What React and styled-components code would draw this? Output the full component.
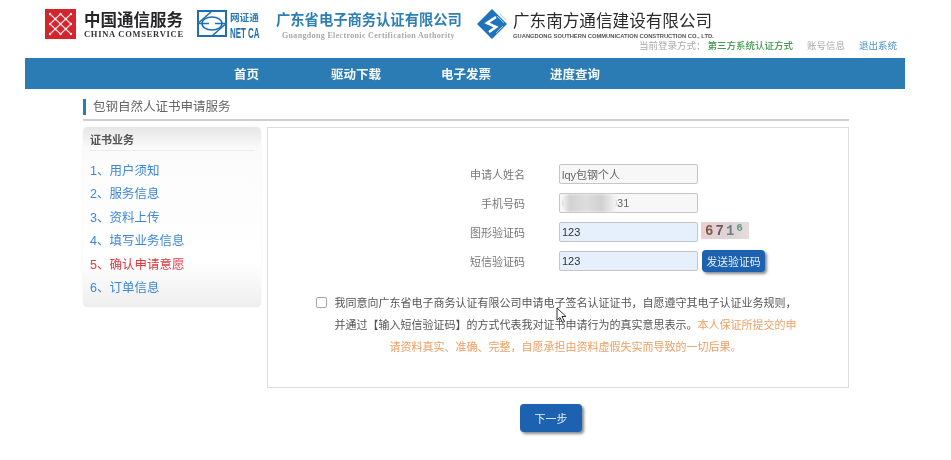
import React from "react";
import styled, { createGlobalStyle } from "styled-components";

const GlobalStyle = createGlobalStyle`
  html, body {
    margin: 0;
    padding: 0;
    background: #fff;
    font-family: "Liberation Sans", "Noto Sans CJK SC", sans-serif;
  }
`;

const Page = styled.div`
  width: 951px;
  height: 460px;
  overflow: hidden;
  filter: blur(0.35px);
`;

const Header = styled.header`
  height: 58px;
  padding: 9px 54px 0 45px;
  box-sizing: border-box;
`;

const LogoRow = styled.div`
  display: flex;
  align-items: flex-start;
  height: 31px;
`;

const LogoStack = styled.div`
  display: flex;
  flex-direction: column;
  flex: none;
  width: ${p => p.$width}px;
  margin-left: ${p => p.$left}px;
`;

const LogoIcon = styled.svg`
  display: block;
  flex: none;
  margin-left: ${p => p.$left || 0}px;
`;

const ComserviceName = styled.div`
  font-size: 16.5px;
  line-height: 18px;
  font-weight: 700;
  color: #26262a;
  margin-top: 2px;
`;

const ComserviceEn = styled.div`
  font-family: "Liberation Serif", serif;
  font-size: 8.5px;
  line-height: 10px;
  font-weight: 700;
  letter-spacing: 0.72px;
  white-space: nowrap;
  color: #333;
`;

const NetcaName = styled.div`
  font-size: 9.6px;
  line-height: 12px;
  font-weight: 700;
  white-space: nowrap;
  color: #2a78b8;
  margin-top: 3px;
`;

const NetcaEn = styled.div`
  font-size: 15px;
  line-height: 15px;
  font-weight: 700;
  white-space: nowrap;
  color: #1f6fb0;
  transform: scaleX(0.53);
  transform-origin: left center;
  margin-top: 1px;
`;

const CertName = styled.div`
  font-size: 14.3px;
  line-height: 20px;
  font-weight: 700;
  white-space: nowrap;
  color: #2c7fb6;
  margin-top: 1px;
`;

const CertEn = styled.div`
  font-family: "Liberation Serif", serif;
  font-size: 8px;
  line-height: 11px;
  font-weight: 700;
  white-space: nowrap;
  letter-spacing: 0.34px;
  color: #a8a8a8;
  margin-left: 6px;
`;

const SouthName = styled.div`
  font-size: 16.6px;
  line-height: 22px;
  color: #2a2a2a;
  white-space: nowrap;
  margin-top: 2px;
`;

const SouthEn = styled.div`
  font-size: 5.8px;
  line-height: 7px;
  font-weight: 700;
  white-space: nowrap;
  color: #555;
`;

const UserRow = styled.div`
  display: flex;
  justify-content: flex-end;
  font-size: 9.5px;
  line-height: 12px;
`;

const UserItem = styled.span`
  color: ${p => p.$color};
  font-weight: ${p => p.$bold ? 500 : 400};
  margin-left: ${p => p.$left || 0}px;
`;

const Nav = styled.nav`
  display: flex;
  height: 31px;
  margin: 0 46px 0 25px;
  padding-left: 209px;
  background: #2b7bb4;
  align-items: center;
`;

const NavLink = styled.a`
  font-size: 12.5px;
  font-weight: 700;
  color: #f4f8fb;
  white-space: nowrap;
  margin-right: ${p => p.$gap}px;
`;

const Content = styled.main`
  width: 766px;
  margin-left: 83px;
`;

const TitleBar = styled.div`
  display: flex;
  align-items: flex-start;
  height: 20px;
  margin-top: 10px;
  border-bottom: 2px solid #cfcfcf;
  font-size: 12.5px;
  line-height: 17px;
  color: #666;

  &::before {
    content: "";
    flex: none;
    width: 3px;
    height: 16px;
    margin-right: 7px;
    background: #2b7bb4;
  }
`;

const Columns = styled.div`
  display: flex;
  align-items: flex-start;
  gap: 6px;
  margin-top: 6px;
`;

const Side = styled.aside`
  width: 178px;
  height: 180px;
  box-sizing: border-box;
  padding: 0 6px 0 7px;
  border-radius: 5px;
  background: linear-gradient(#e6e6e6 0, #fbfbfb 22px, #fff 135px, #eeeeee 100%);
  box-shadow: 0 0 1px #ccc;
`;

const SideTitle = styled.div`
  height: 17px;
  padding-top: 6px;
  margin-bottom: 9px;
  font-size: 11px;
  line-height: 15px;
  font-weight: 700;
  color: #555;
  border-bottom: 1px solid #ececec;
`;

const StepList = styled.ol`
  list-style: none;
  margin: 0;
  padding: 0;
`;

const Step = styled.li`
  height: 23.4px;
  font-size: 12.5px;
  line-height: 23.4px;
  white-space: nowrap;
  color: ${p => p.$active ? "#e2393f" : "#3d86d8"};
`;

const Panel = styled.section`
  position: relative;
  width: 582px;
  height: 261px;
  box-sizing: border-box;
  padding-top: 36px;
  border: 1px solid #ddd;
`;

const FormRows = styled.div`
  display: flex;
  flex-direction: column;
  gap: 9px;
`;

const Row = styled.div`
  display: flex;
  align-items: center;
  height: 20px;
`;

const Label = styled.label`
  width: 257px;
  margin-right: 34px;
  flex: none;
  text-align: right;
  font-size: 11px;
  color: #777;
`;

const FieldWrap = styled.div`
  position: relative;
  flex: none;
  width: 139px;
  height: 20px;
`;

const Input = styled.input`
  display: block;
  width: 100%;
  height: 100%;
  box-sizing: border-box;
  margin: 0;
  padding: 0 2px;
  border: 1px solid #c2c6ca;
  border-radius: 2px;
  outline: none;
  font: 11px "Liberation Sans", "Noto Sans CJK SC", sans-serif;
  background: ${p => p.$filled ? "#e6f0fd" : "#f7f7f7"};
  color: ${p => p.$filled ? "#333" : "#666"};
`;

const PhoneMask = styled.span`
  position: absolute;
  left: 3px;
  top: 1px;
  width: 55px;
  height: 18px;
  border-radius: 6px;
  background: linear-gradient(90deg, #f6f6f6 0, #d2d2d2 14%, #dedede 45%, #d0d0d0 72%, #f7f7f7 100%);
  filter: blur(1px);
`;

const Captcha = styled.div`
  align-self: flex-start;
  display: flex;
  align-items: center;
  justify-content: center;
  width: 48px;
  height: 17px;
  margin-left: 3px;
  background: linear-gradient(90deg, #eccfd2, #dcd3d6 60%, #e6dcdc);
  font: 700 14px "Liberation Mono", monospace;
  letter-spacing: 2px;
`;

const CaptchaDigit = styled.span`
  color: ${p => p.$color};
  font-size: ${p => p.$size || 14}px;
  position: relative;
  top: ${p => p.$up || 0}px;
`;

const SendButton = styled.button`
  flex: none;
  width: 63px;
  height: 22px;
  margin-left: 4px;
  padding: 0;
  border: none;
  border-radius: 4px;
  background: #1d62b0;
  color: #e8eff7;
  font: 10.8px "Liberation Sans", "Noto Sans CJK SC", sans-serif;
  white-space: nowrap;
  box-shadow: 2px 2px 3px #888;
`;

const Agreement = styled.div`
  display: flex;
  align-items: flex-start;
  margin: 21px 0 0 48px;
`;

const CheckBox = styled.input`
  appearance: none;
  flex: none;
  width: 11px;
  height: 11px;
  box-sizing: border-box;
  margin: 5px 7px 0 0;
  border: 1px solid #a5a5a5;
  border-radius: 2px;
  background: #fff;
`;

const AgreementText = styled.div`
  width: 463px;
  font-size: 11px;
  line-height: 22px;
  text-align: center;
  color: #555;
`;

const AgreementLine = styled.div`
  white-space: nowrap;
`;

const Warning = styled.span`
  color: #ef9e63;
`;

const Pointer = styled.svg`
  position: absolute;
  left: 288px;
  top: 179px;
`;

const NextRow = styled.div`
  display: flex;
  margin-top: 16px;
  padding-left: 437px;
`;

const NextButton = styled.button`
  width: 62px;
  height: 28px;
  padding: 0;
  border: none;
  border-radius: 4px;
  background: #1d62b0;
  color: #e8eff7;
  font: 11px "Liberation Sans", "Noto Sans CJK SC", sans-serif;
  box-shadow: 2px 2px 3px #888;
`;

const latticeNodes = [
  [5, 5], [15.5, 5], [26, 5],
  [10.25, 10], [20.75, 10],
  [5, 15], [15.5, 15], [26, 15],
  [10.25, 20], [20.75, 20],
  [5, 25], [15.5, 25], [26, 25]
];

function ComserviceLogo() {
  return (
    <LogoIcon width="31" height="30" viewBox="0 0 31 30">
      <rect width="31" height="30" fill="#d2252d" />
      <path
        d="M5 5 L26 25 M5 15 L15.5 25 M15.5 5 L26 15 M26 5 L5 25 M26 15 L15.5 25 M15.5 5 L5 15"
        stroke="#f7dede"
        strokeWidth="1.1"
        fill="none"
      />
      <g fill="#fbeaea">
        {latticeNodes.map(([x, y]) => <circle key={`${x}-${y}`} cx={x} cy={y} r="1.2" />)}
      </g>
    </LogoIcon>
  );
}

function NetcaLogo() {
  return (
    <LogoIcon $left={14} width="30" height="29" viewBox="0 0 30 29">
      <g fill="none" stroke="#1f6fb0" strokeWidth="2">
        <rect x="1" y="2" width="28" height="25" />
        <ellipse cx="15" cy="14.5" rx="10" ry="6.5" strokeWidth="1.6" />
        <path d="M1 14.5 H12 M18 14.5 H29" strokeWidth="1.6" />
        <path d="M15 2 L2 13.5 M15 27 L28 15.5" strokeWidth="1.6" />
      </g>
    </LogoIcon>
  );
}

function SouthernLogo() {
  return (
    <LogoIcon $left={15} width="30" height="30" viewBox="0 0 30 30">
      <path d="M15 0 L30 15 L15 30 L0 15 Z" fill="#1e74bb" />
      <path d="M20 7 L27 14 M23 5 L29 11 M19 24 L26 17" stroke="#a6cfec" strokeWidth="1" />
      <path d="M19 8 L10 14 L19 18 L12 23" fill="none" stroke="#fff" strokeWidth="2.6" />
    </LogoIcon>
  );
}

const navLinks = [
  { text: "首页", gap: 72 },
  { text: "驱动下载", gap: 60 },
  { text: "电子发票", gap: 59 },
  { text: "进度查询", gap: 0 }
];

const steps = [
  "1、用户须知",
  "2、服务信息",
  "3、资料上传",
  "4、填写业务信息",
  "5、确认申请意愿",
  "6、订单信息"
];

export default function App() {
  return (
    <Page>
      <GlobalStyle />
      <Header>
        <LogoRow>
          <ComserviceLogo />
          <LogoStack $left={8} $width={99}>
            <ComserviceName>中国通信服务</ComserviceName>
            <ComserviceEn>CHINA COMSERVICE</ComserviceEn>
          </LogoStack>
          <NetcaLogo />
          <LogoStack $left={3} $width={29}>
            <NetcaName>网证通</NetcaName>
            <NetcaEn>NET CA</NetcaEn>
          </LogoStack>
          <LogoStack $left={17} $width={186}>
            <CertName>广东省电子商务认证有限公司</CertName>
            <CertEn>Guangdong Electronic Certification Authority</CertEn>
          </LogoStack>
          <SouthernLogo />
          <LogoStack $left={6} $width={200}>
            <SouthName>广东南方通信建设有限公司</SouthName>
            <SouthEn>GUANGDONG SOUTHERN COMMUNICATION CONSTRUCTION CO., LTD.</SouthEn>
          </LogoStack>
        </LogoRow>
        <UserRow>
          <UserItem $color="#aaa">当前登录方式：</UserItem>
          <UserItem $color="#3f9a4e" $bold $left={2}>第三方系统认证方式</UserItem>
          <UserItem $color="#aaa" $left={14}>账号信息</UserItem>
          <UserItem $color="#4f8fc4" $left={14}>退出系统</UserItem>
        </UserRow>
      </Header>
      <Nav>
        {navLinks.map(link => (
          <NavLink key={link.text} $gap={link.gap}>{link.text}</NavLink>
        ))}
      </Nav>
      <Content>
        <TitleBar>包钢自然人证书申请服务</TitleBar>
        <Columns>
          <Side>
            <SideTitle>证书业务</SideTitle>
            <StepList>
              {steps.map((step, i) => (
                <Step key={step} $active={i === 4}>{step}</Step>
              ))}
            </StepList>
          </Side>
          <Panel>
            <FormRows>
              <Row>
                <Label>申请人姓名</Label>
                <FieldWrap><Input readOnly value="lqy包钢个人" /></FieldWrap>
              </Row>
              <Row>
                <Label>手机号码</Label>
                <FieldWrap>
                  <Input readOnly value="00000000031" />
                  <PhoneMask />
                </FieldWrap>
              </Row>
              <Row>
                <Label>图形验证码</Label>
                <FieldWrap><Input $filled readOnly value="123" /></FieldWrap>
                <Captcha>
                  <CaptchaDigit $color="#7a5a48">6</CaptchaDigit>
                  <CaptchaDigit $color="#6a5a58">7</CaptchaDigit>
                  <CaptchaDigit $color="#6f8088">1</CaptchaDigit>
                  <CaptchaDigit $color="#5f9a82" $size={11} $up={-3}>6</CaptchaDigit>
                </Captcha>
              </Row>
              <Row>
                <Label>短信验证码</Label>
                <FieldWrap><Input $filled readOnly value="123" /></FieldWrap>
                <SendButton>发送验证码</SendButton>
              </Row>
            </FormRows>
            <Agreement>
              <CheckBox type="checkbox" />
              <AgreementText>
                <AgreementLine>我同意向广东省电子商务认证有限公司申请电子签名认证证书，自愿遵守其电子认证业务规则，</AgreementLine>
                <AgreementLine>
                  并通过【输入短信验证码】的方式代表我对证书申请行为的真实意思表示。<Warning>本人保证所提交的申</Warning>
                </AgreementLine>
                <AgreementLine>
                  <Warning>请资料真实、准确、完整，自愿承担由资料虚假失实而导致的一切后果。</Warning>
                </AgreementLine>
              </AgreementText>
            </Agreement>
            <Pointer width="12" height="17" viewBox="0 0 12 17">
              <path d="M1 1 V13 L4 10.5 L6.5 15.5 L8.5 14.5 L6 9.5 H10 Z" fill="#fff" stroke="#333" strokeWidth="1" />
            </Pointer>
          </Panel>
        </Columns>
        <NextRow>
          <NextButton>下一步</NextButton>
        </NextRow>
      </Content>
    </Page>
  );
}
